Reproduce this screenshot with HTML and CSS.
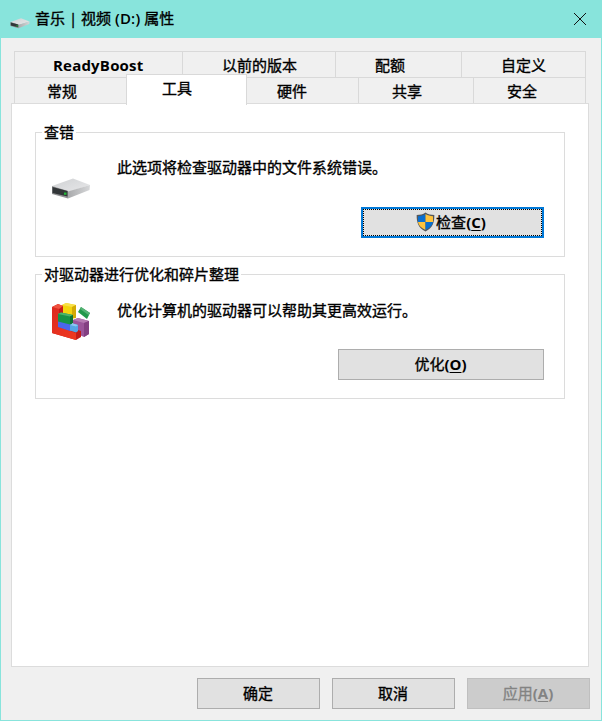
FILE: index.html
```html
<!DOCTYPE html>
<html lang="zh-CN">
<head>
<meta charset="utf-8">
<title>音乐 | 视频 (D:) 属性</title>
<link rel="stylesheet" href="styles.css">
</head>
<body>
<svg width="0" height="0" class="defs" aria-hidden="true">
  <defs>
    <linearGradient id="top" x1="0" y1="0" x2="1" y2="1"><stop offset="0" stop-color="#cfd1d3"/><stop offset="1" stop-color="#e8e8ea"/></linearGradient>
    <linearGradient id="side" x1="0" y1="0" x2="1" y2="0"><stop offset="0" stop-color="#a9aaac"/><stop offset="1" stop-color="#d6d7d9"/></linearGradient>
    <linearGradient id="red" x1="0" y1="0" x2="1" y2="1"><stop offset="0" stop-color="#dd2920"/><stop offset="1" stop-color="#f03a20"/></linearGradient>
    <symbol id="drive" viewBox="0 0 40 22">
      <path d="M1 8 22 .5 39 7 17 14Z" fill="url(#top)"/>
      <path d="M17 13.500 39 7 38.500 12 17 20.500Z" fill="url(#side)"/>
      <path d="M1 8 17 13V20.500L1 16Z" fill="#8f9092"/>
      <path d="M1.500 9 16.500 13V18.500L1.500 15Z" fill="#323638"/>
      <path d="M13 14.500h2.500v2.300h-2.500z" fill="#24b739"/>
    </symbol>
  </defs>
</svg>
<div class="window">
  <header class="titlebar">
    <svg class="title-icon"><use href="#drive"/></svg>
    <span class="title">音乐 | 视频 <span class="letter">(D:)</span> 属性</span>
    <svg class="close" viewBox="0 0 12 12"><path d="M0 0 12 12M12 0 0 12" stroke="#111" fill="none"/></svg>
  </header>
  <main class="body">
    <nav class="tabs">
      <div class="row upper">
        <div class="tab boost">ReadyBoost</div><div class="tab previous">以前的版本</div><div class="tab quota">配额</div><div class="tab custom">自定义</div>
      </div>
      <div class="row lower">
        <div class="tab general">常规</div><div class="tab active">工具</div><div class="tab hardware">硬件</div><div class="tab sharing">共享</div><div class="tab security">安全</div>
      </div>
    </nav>
    <section class="panel">
      <section class="group">
        <h2 class="legend">查错</h2>
        <div class="info">
          <svg class="icon drive-icon"><use href="#drive"/></svg>
          <p>此选项将检查驱动器中的文件系统错误。</p>
        </div>
        <button class="btn check">
          <svg class="shield" viewBox="0 0 19 20">
            <path d="M9.500 .5C7 2.300 4 3 .7 3 .5 10.500 2.300 16 9.500 19.500 16.700 16 18.500 10.500 18.300 3 15 3 12 2.300 9.500 .5Z" fill="#55585b"/>
            <path d="M9.500 2C7.200 3.400 4.800 4 2 4.200V10H9.500Z" fill="#0a6fd0"/>
            <path d="M9.500 2c2.300 1.400 4.700 2 7.500 2.200V10H9.500Z" fill="#ffc33c"/>
            <path d="M2 10H9.500V18C5 15.800 2.600 13.500 2 10Z" fill="#ffc33c"/>
            <path d="M9.500 10H17c-.6 3.500-3 5.800-7.500 8Z" fill="#0a6fd0"/>
          </svg><span>检查<b>(<u>C</u>)</b></span>
        </button>
      </section>
      <section class="group">
        <h2 class="legend">对驱动器进行优化和碎片整理</h2>
        <div class="info lowered">
          <svg class="icon defrag-icon" viewBox="0 0 40 40">
            <path d="M11 4 15 2 25 4V17L12 20 11 17Z" fill="#f3d40f"/>
            <path d="M11 4 15 2 25 4 21 6Z" fill="#f8e04a"/>
            <path d="M21 6 25 4V17H21Z" fill="#d3aa05"/>
            <path d="M22 19 27 17 38 20V33L33 36 22 31Z" fill="#9b559a"/>
            <path d="M22 19 27 17 38 20 33 22Z" fill="#b57ab2"/>
            <path d="M33 22 38 20V33L33 36Z" fill="#834082"/>
            <path d="M1 6 7 3 12 5V24L30 30V36L25 39 1 32Z" fill="#c51c18"/>
            <path d="M1 6 8 8V26L25 32V39L1 32Z" fill="url(#red)"/>
            <path d="M1 6 7 3 12 5 8 8Z" fill="#f0523f"/>
            <path d="M7 20 21 22V29L19 30 7 26Z" fill="#4a67ec"/>
            <path d="M7 13 10 11.500 22 14V22L19 23.500 7 20.500Z" fill="#179347"/>
            <path d="M7 13 10 11.500 22 14 19 15.500Z" fill="#4db36b"/>
            <path d="M19 15.500 22 14V22L19 23.500Z" fill="#0c7334"/>
            <path d="M19 24 22 22.500 27 24V30L25 31.500 19 29.500Z" fill="#55a5e6"/>
            <path d="M19 24 22 22.500 27 24 25 25.500Z" fill="#8bc9f2"/>
            <path d="M27 11 30 6 39 12 36 18Z" fill="#22994b"/>
            <path d="M30 6 39 12 37.500 14 29 8Z" fill="#54b274"/>
          </svg>
          <p>优化计算机的驱动器可以帮助其更高效运行。</p>
        </div>
        <button class="btn optimize"><span>优化<b>(<u>O</u>)</b></span></button>
      </section>
    </section>
    <footer class="actions">
      <button class="btn">确定</button>
      <button class="btn">取消</button>
      <button class="btn" disabled><span>应用<b>(<u>A</u>)</b></span></button>
    </footer>
  </main>
</div>
</body>
</html>
```
FILE: styles.css
```css
* { box-sizing: border-box; }
body { margin: 0; font: 400 15px/20px "Open Sans", "Noto Sans CJK SC", sans-serif; color: #000; -webkit-text-stroke: .35px currentColor; }
b { font-weight: 700; -webkit-text-stroke: 0; }
.defs { display: block; height: 0; }
.window { width: 602px; height: 721px; border: 1px solid #88e4dc; border-top: 0; background: #f0f0f0; display: flex; flex-direction: column; }
.titlebar { height: 38px; flex: none; background: #88e4dc; display: flex; align-items: center; padding: 0 15px 0 9px; }
.title-icon { width: 20px; height: 11px; margin-top: 8px; }
.title { margin: -3px 0 0 5px; flex: 1; white-space: nowrap; }
.letter { font-weight: 600; -webkit-text-stroke: 0; letter-spacing: .2px; }
.close { width: 12px; height: 12px; overflow: visible; }
.body { flex: 1; padding: 13px 11px 0 10px; display: flex; flex-direction: column; }
.tabs { margin: 0 4px 0 3px; width: 572px; flex: none; }
.row { display: flex; height: 26px; border-top: 1px solid #d9d9d9; border-left: 1px solid #d9d9d9; }
.tab { border-right: 1px solid #d9d9d9; padding-top: 3px; height: 25px; white-space: nowrap; }
.boost { width: 168px; padding-left: 38px; font-weight: 700; letter-spacing: .2px; -webkit-text-stroke: 0; }
.previous { width: 153px; padding-left: 39px; }
.quota { width: 126px; padding-left: 39px; }
.custom { width: 124px; padding-left: 39px; }
.general { width: 112px; padding-left: 32px; }
.active { width: 121px; height: 31px; margin: -4px 0 0 -1px; padding: 3px 0 0 35px; background: #fff; border: 1px solid #d9d9d9; border-bottom: 0; z-index: 1; }
.hardware { width: 112px; padding-left: 30px; }
.sharing { width: 115px; padding-left: 33px; }
.security { width: 112px; padding-left: 33px; }
.panel { width: 578px; height: 564px; flex: none; background: #fff; border: 1px solid #dcdcdc; padding: 28px 23px; display: flex; flex-direction: column; gap: 17px; }
.group { width: 530px; height: 125px; border: 1px solid #dcdcdc; display: flex; flex-direction: column; }
.legend { font: inherit; margin: -11px 0 0 6px; padding: 0 2px; background: #fff; align-self: flex-start; height: 20px; }
.info { display: flex; height: 65px; padding-left: 15px; }
.icon { width: 40px; flex: none; }
.drive-icon { height: 22px; margin-top: 36px; }
.defrag-icon { height: 40px; margin-top: 17px; }
.info p { margin: 15px 0 0 26px; white-space: nowrap; }
.lowered p { margin-top: 16px; }
.btn { font: inherit; color: #000; height: 31px; padding: 0 1px 1px 0; border: 1px solid #adadad; background: #e1e1e1; display: flex; align-items: center; justify-content: center; border-radius: 0; -webkit-text-stroke: .35px currentColor; }
.check { width: 183px; align-self: flex-end; margin-right: 20px; border: 2px solid #0078d7; outline: 1px dotted #000; outline-offset: -3px; padding: 0 3px 1px 0; }
.optimize { width: 206px; align-self: flex-end; margin-right: 20px; }
.shield { width: 19px; height: 20px; margin-right: 1px; margin-top: -1px; }
.actions { display: flex; justify-content: flex-end; gap: 12px; padding-top: 11px; }
.actions .btn { width: 123px; }
.actions .btn:disabled { color: #838383; background: #ccc; border-color: #bfbfbf; }
u { text-underline-offset: 2px; text-decoration-thickness: 1px; }
```
